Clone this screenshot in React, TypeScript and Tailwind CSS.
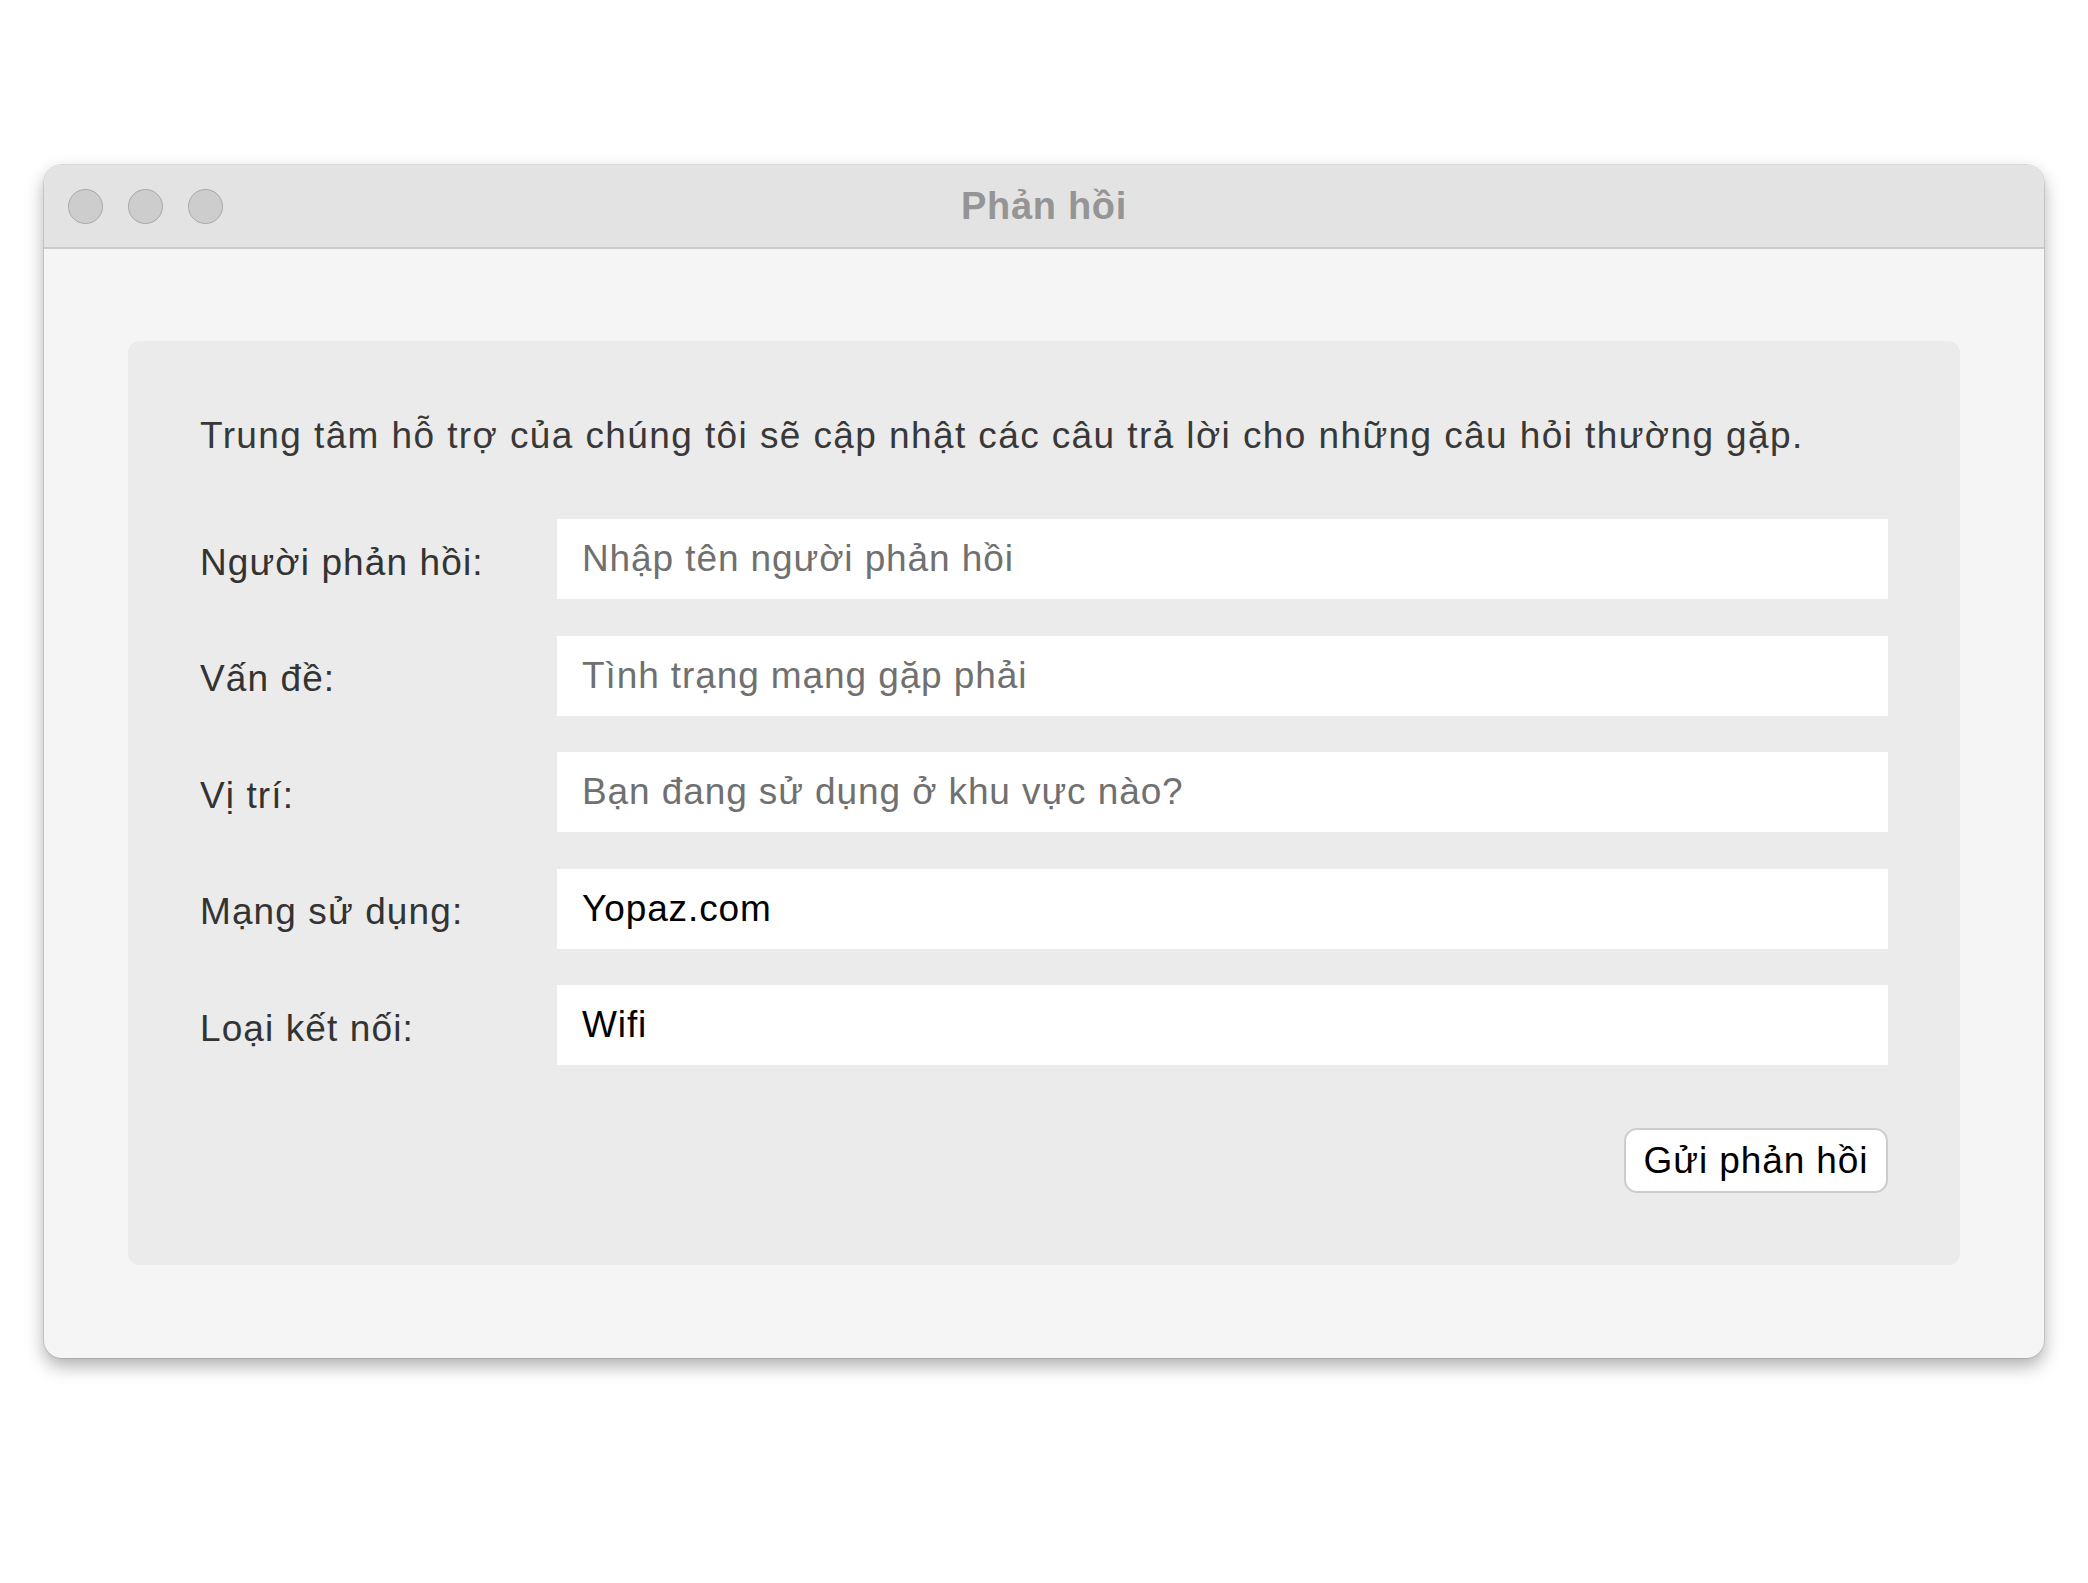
const font = { fontFamily: '"Liberation Sans", Arial, sans-serif' };

const rows = [
  { label: 'Người phản hồi:', value: '', placeholder: 'Nhập tên người phản hồi' },
  { label: 'Vấn đề:', value: '', placeholder: 'Tình trạng mạng gặp phải' },
  { label: 'Vị trí:', value: '', placeholder: 'Bạn đang sử dụng ở khu vực nào?' },
  { label: 'Mạng sử dụng:', value: 'Yopaz.com', placeholder: '' },
  { label: 'Loại kết nối:', value: 'Wifi', placeholder: '' },
];

export default function App() {
  return (
    <div className="min-h-[1583px] w-full bg-white pt-[165px]" style={font}>
      <div className="mx-auto w-[2000px] overflow-hidden rounded-[18px] bg-[#f5f5f5] shadow-[0_0_0_1px_rgba(0,0,0,0.1),0_8px_18px_rgba(0,0,0,0.32)]">
        {/* title bar */}
        <div className="relative flex h-[84px] items-center border-b-2 border-[#cacaca] bg-[#e3e3e3] px-[24px]">
          <div className="flex gap-[25px]">
            <span className="h-[35px] w-[35px] rounded-full border-[1.5px] border-[#a8a8a8] bg-[#cdcdcd]" />
            <span className="h-[35px] w-[35px] rounded-full border-[1.5px] border-[#a8a8a8] bg-[#cdcdcd]" />
            <span className="h-[35px] w-[35px] rounded-full border-[1.5px] border-[#a8a8a8] bg-[#cdcdcd]" />
          </div>
          <div className="absolute inset-x-0 top-0 flex h-[82px] items-center justify-center text-[38px] font-bold tracking-[0.7px] text-[#959595]">
            Phản hồi
          </div>
        </div>

        {/* body */}
        <div className="px-[84px] pt-[92px] pb-[93px]">
          <div className="rounded-[12px] bg-[#ebebeb] px-[72px] pt-[73px] pb-[72px]">
            <p className="text-[37px] leading-[44px] tracking-[1.4px] text-[#383838]">
              Trung tâm hỗ trợ của chúng tôi sẽ cập nhật các câu trả lời cho những câu hỏi thường gặp.
            </p>

            <div className="mt-[61px] flex flex-col gap-[36.5px]">
              {rows.map((r) => (
                <div key={r.label} className="flex items-center">
                  <label className="w-[357px] shrink-0 pt-[7px] text-[37px] tracking-[1.1px] text-[#333333]">{r.label}</label>
                  <input
                    className="h-[80px] flex-1 bg-white px-[25px] text-[37px] tracking-[0.9px] text-black outline-none placeholder:text-[#707070]"
                    style={font}
                    defaultValue={r.value}
                    placeholder={r.placeholder}
                  />
                </div>
              ))}
            </div>

            <div className="mt-[63px] flex justify-end">
              <button
                className="h-[65px] w-[264px] rounded-[13px] border-2 border-[#cccccc] bg-white text-[37px] tracking-[0.9px] text-black"
                style={font}
              >
                Gửi phản hồi
              </button>
            </div>
          </div>
        </div>
      </div>
    </div>
  );
}
